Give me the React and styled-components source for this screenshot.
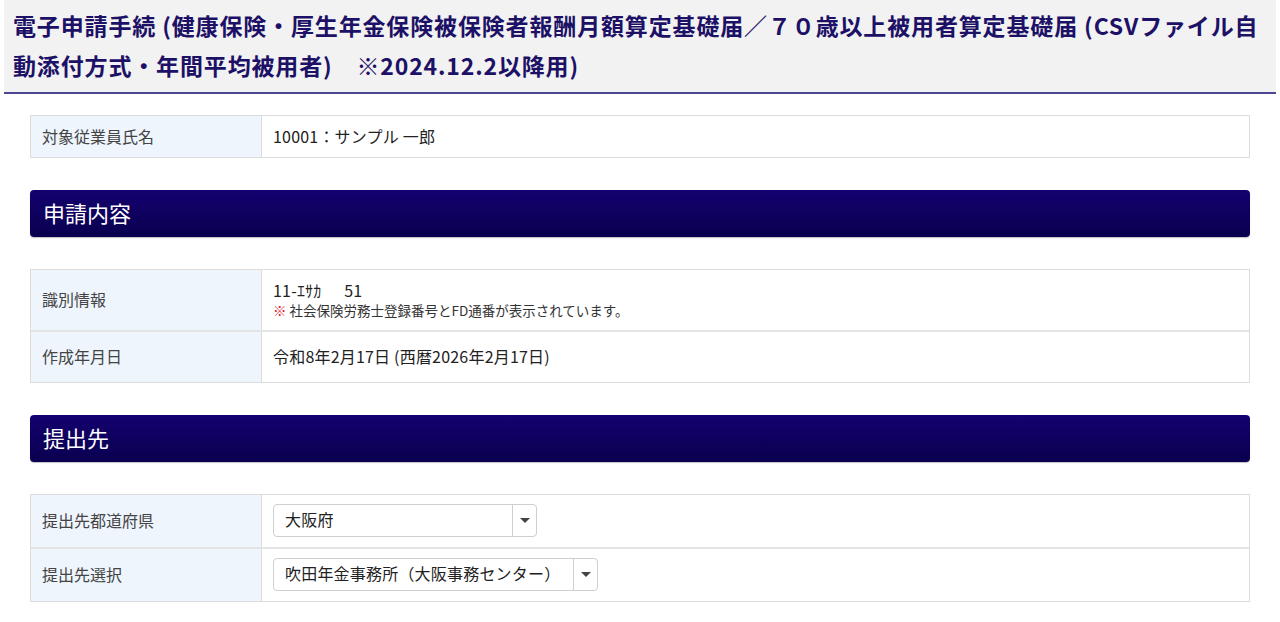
import React from 'react';
import styled, { createGlobalStyle } from 'styled-components';

const GlobalStyle = createGlobalStyle`
  body {
    margin: 0;
    padding: 0 4px;
    background: #fff;
    font-family: "Noto Sans CJK JP", "Noto Sans", sans-serif;
    color: #333;
  }
`;

const Header = styled.div`
  background: #f2f2f2;
  border-bottom: 2px solid #4b4694;
  padding: 5px 8px 7px 9px;
`;

const Title = styled.h1`
  margin: 0;
  font-size: 23px;
  line-height: 40px;
  font-weight: bold;
  color: #1c1166;
  letter-spacing: 0.85px;
`;

const Content = styled.div`
  padding: 21px 26px 0;
  display: flex;
  flex-direction: column;
`;

const Table = styled.div`
  border: 1px solid #dcdcdc;
  margin-bottom: 32px;
`;

const Row = styled.div`
  display: flex;
  min-height: ${(p) => p.$h}px;
  & + & {
    border-top: 2px solid #e4e4e4;
  }
`;

const Label = styled.div`
  width: 231px;
  flex: 0 0 231px;
  background: #eef5fd;
  border-right: 1px solid #dcdcdc;
  display: flex;
  align-items: center;
  padding: 0 0 2px 11px;
  font-size: 16px;
  color: #444;
  box-sizing: border-box;
`;

const Value = styled.div`
  flex: 1;
  display: flex;
  flex-direction: column;
  justify-content: center;
  padding: 0 11px 2px;
  font-size: 16px;
  color: #222;
  letter-spacing: 0.2px;
`;

const Code = styled.div`
  white-space: pre;
  line-height: 22px;
`;

const Note = styled.div`
  font-size: 13.5px;
  color: #333;
  line-height: 18px;
  letter-spacing: 0;
  span {
    color: #e8202a;
  }
`;

const SectionBar = styled.div`
  height: 47px;
  box-sizing: border-box;
  border-radius: 4px;
  background: linear-gradient(#14016f, #09004f);
  color: #fff;
  font-size: 22px;
  display: flex;
  align-items: center;
  padding: 0 0 4px 13px;
  margin-bottom: 32px;
  box-shadow: 0 1px 1px rgba(0, 0, 0, 0.25);
`;

const Select = styled.div`
  display: inline-flex;
  align-items: stretch;
  align-self: flex-start;
  height: 33px;
  box-sizing: border-box;
  border: 1px solid #cfcfcf;
  border-radius: 4px;
  background: #fff;
  width: ${(p) => p.$w}px;
`;

const SelectText = styled.div`
  flex: 1;
  display: flex;
  align-items: center;
  padding: 0 0 2px 11px;
  font-size: 16px;
  color: #222;
  white-space: nowrap;
`;

const SelectArrow = styled.div`
  width: 23px;
  border-left: 1px solid #cfcfcf;
  display: flex;
  align-items: center;
  justify-content: center;
  &::after {
    content: '';
    border-left: 5px solid transparent;
    border-right: 5px solid transparent;
    border-top: 5px solid #444;
  }
`;

export default function App() {
  return (
    <>
      <GlobalStyle />
      <Header>
        <Title>
          電子申請手続 (健康保険・厚生年金保険被保険者報酬月額算定基礎届／７０歳以上被用者算定基礎届 (CSVファイル自動添付方式・年間平均被用者)　※2024.12.2以降用)
        </Title>
      </Header>
      <Content>
        <Table>
          <Row $h={41}>
            <Label>対象従業員氏名</Label>
            <Value>10001：サンプル 一郎</Value>
          </Row>
        </Table>

        <SectionBar>申請内容</SectionBar>

        <Table>
          <Row $h={60}>
            <Label>識別情報</Label>
            <Value>
              <Code>{'11-ｴｻｶ      51'}</Code>
              <Note>
                <span>※</span> 社会保険労務士登録番号とFD通番が表示されています。
              </Note>
            </Value>
          </Row>
          <Row $h={50}>
            <Label>作成年月日</Label>
            <Value>令和8年2月17日 (西暦2026年2月17日)</Value>
          </Row>
        </Table>

        <SectionBar>提出先</SectionBar>

        <Table>
          <Row $h={52}>
            <Label>提出先都道府県</Label>
            <Value>
              <Select $w={264}>
                <SelectText>大阪府</SelectText>
                <SelectArrow />
              </Select>
            </Value>
          </Row>
          <Row $h={52}>
            <Label>提出先選択</Label>
            <Value>
              <Select $w={325}>
                <SelectText>吹田年金事務所（大阪事務センター）</SelectText>
                <SelectArrow />
              </Select>
            </Value>
          </Row>
        </Table>
      </Content>
    </>
  );
}
